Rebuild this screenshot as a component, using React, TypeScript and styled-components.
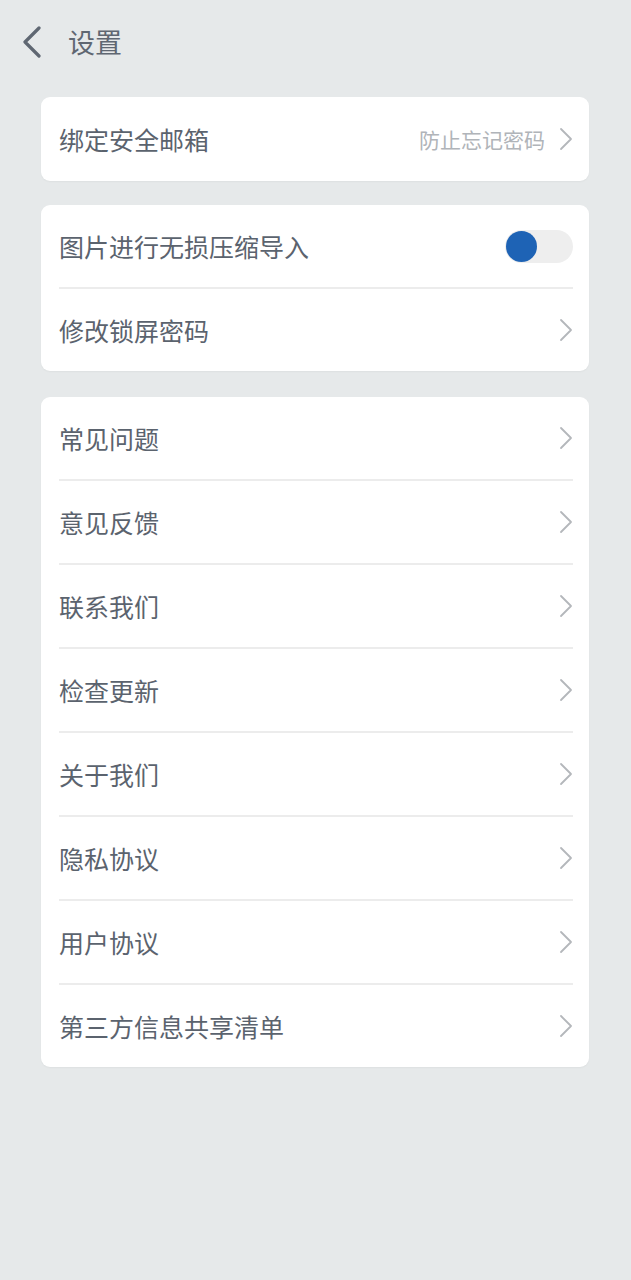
import React, { useState } from "react";
import styled, { createGlobalStyle } from "styled-components";

const GlobalStyle = createGlobalStyle`
	html, body {
		margin: 0;
		padding: 0;
		background: #e6e9ea;
	}
	body {
		font-family: "Noto Sans CJK SC", "Noto Sans", sans-serif;
	}
`;

const helpItems = ["常见问题", "意见反馈", "联系我们", "检查更新", "关于我们", "隐私协议", "用户协议", "第三方信息共享清单"];

const Chevron = () => (
	<svg width="14" height="24" viewBox="0 0 14 24" fill="none">
		<path d="M2 2 L12 12 L2 22" stroke="#b4b7bb" strokeWidth="1.8" strokeLinecap="round" strokeLinejoin="round" />
	</svg>
);

const App = () => {
	const [compress, setCompress] = useState(false);

	return (
		<Page>
			<GlobalStyle />
			<Header>
				<BackBtn>
					<svg width="24" height="32" viewBox="0 0 24 32" fill="none">
						<path d="M19 2 L5 16 L19 30" stroke="#5f6772" strokeWidth="3.2" strokeLinecap="round" strokeLinejoin="round" />
					</svg>
				</BackBtn>
				<Title>设置</Title>
			</Header>

			<Card>
				<Row $h={84}>
					<Label>绑定安全邮箱</Label>
					<Right>
						<Hint>防止忘记密码</Hint>
						<Chevron />
					</Right>
				</Row>
			</Card>

			<Card>
				<Row>
					<Label>图片进行无损压缩导入</Label>
					<Toggle $on={compress} onClick={() => setCompress(!compress)}>
						<Knob />
					</Toggle>
				</Row>
				<Row>
					<Label>修改锁屏密码</Label>
					<Chevron />
				</Row>
			</Card>

			<Card $top={26}>
				{helpItems.map((t) => (
					<Row key={t}>
						<Label>{t}</Label>
						<Chevron />
					</Row>
				))}
			</Card>
		</Page>
	);
};

const Page = styled.div`
	min-height: 1280px;
	background: #e6e9ea;
	padding-top: 1px;
	padding-bottom: 40px;
	box-sizing: border-box;
`;

const Header = styled.div`
	display: flex;
	align-items: center;
	height: 72px;
	padding: 10px 0 0 20px;
	box-sizing: border-box;
`;

const BackBtn = styled.div`
	display: flex;
	align-items: center;
	width: 48px;
	height: 40px;
`;

const Title = styled.div`
	font-size: 27px;
	color: #5f6772;
	line-height: 1;
	margin-top: -2px;
`;

const Card = styled.div<{ $top?: number }>`
	margin: ${(p) => p.$top ?? 24}px 42px 0 41px;
	background: #ffffff;
	border-radius: 9px;
	padding: 0 16px 0 18px;
	box-shadow: 0 1px 2px rgba(0, 0, 0, 0.04);
`;

const Row = styled.div<{ $h?: number }>`
	display: flex;
	justify-content: space-between;
	align-items: center;
	height: ${(p) => p.$h ?? 82}px;
	& + & {
		border-top: 2px solid #ececec;
		height: 82px;
	}
`;

const Label = styled.div`
	font-size: 25px;
	color: #5b636e;
`;

const Right = styled.div`
	display: flex;
	align-items: center;
	gap: 14px;
`;

const Hint = styled.div`
	font-size: 21px;
	color: #b0b4b9;
`;

const Toggle = styled.div<{ $on: boolean }>`
	width: 68px;
	height: 33px;
	border-radius: 17px;
	background: ${(p) => (p.$on ? "#9fbde3" : "#eeeeee")};
	display: flex;
	align-items: center;
	justify-content: ${(p) => (p.$on ? "flex-end" : "flex-start")};
	cursor: pointer;
`;

const Knob = styled.div`
	width: 31px;
	height: 31px;
	border-radius: 50%;
	background: #1e63b5;
	margin: 0 1px;
`;

export default App;
